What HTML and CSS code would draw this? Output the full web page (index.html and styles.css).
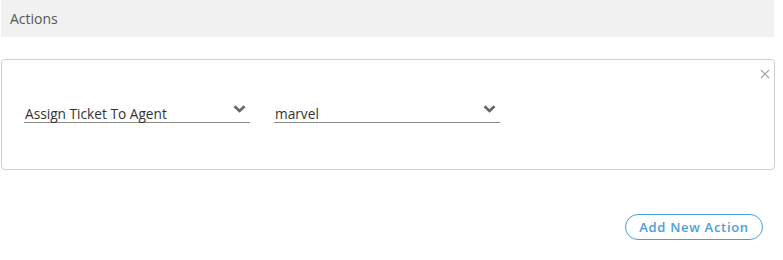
FILE: index.html
```html
<!DOCTYPE html>
<html>
<head>
<meta charset="utf-8">
<link rel="stylesheet" href="styles.css">
</head>
<body>
<div class="page">
  <div class="section-header">Actions</div>
  <div class="action-card">
    <button class="close-btn" aria-label="Remove">
      <svg width="10" height="10" viewBox="0 0 10 10"><path d="M1 1L9 9M9 1L1 9" stroke="#9aa3ab" stroke-width="1.2" fill="none"/></svg>
    </button>
    <div class="action-row">
      <div class="select">
        <span class="select-value">Assign Ticket To Agent</span>
        <svg class="chevron" width="13" height="8" viewBox="0 0 13 8"><path d="M1.5 1.2L6.5 6L11.5 1.2" stroke="#666" stroke-width="2.6" fill="none"/></svg>
      </div>
      <div class="select">
        <span class="select-value">marvel</span>
        <svg class="chevron" width="13" height="8" viewBox="0 0 13 8"><path d="M1.5 1.2L6.5 6L11.5 1.2" stroke="#666" stroke-width="2.6" fill="none"/></svg>
      </div>
    </div>
  </div>
  <div class="footer">
    <button class="add-btn">Add New Action</button>
  </div>
</div>
</body>
</html>
```
FILE: styles.css
```css
* { box-sizing: border-box; }
body {
  margin: 0;
  font-family: "Open Sans", "Liberation Sans", sans-serif;
  background: #fff;
  color: #333;
}
.page {
  width: 775px;
  padding-left: 1px;
}
.section-header {
  height: 37px;
  width: 773px;
  background: #f1f1f1;
  font-size: 14px;
  color: #555;
  padding: 9px 0 0 9px;
  line-height: 19px;
}
.action-card {
  position: relative;
  margin-top: 22px;
  width: 774px;
  height: 111px;
  border: 1px solid #cfcfcf;
  border-radius: 4px;
  padding: 37px 0 0 22px;
}
.close-btn {
  position: absolute;
  top: 8px;
  right: 3px;
  border: 0;
  background: none;
  padding: 0;
  width: 12px;
  height: 12px;
  display: flex;
  align-items: center;
  justify-content: center;
}
.action-row {
  display: flex;
  gap: 24px;
}
.select {
  width: 226px;
  height: 26px;
  border-bottom: 1px solid #8a8a8a;
  display: flex;
  align-items: flex-end;
  justify-content: space-between;
  position: relative;
}
.select-value {
  font-size: 13.7px;
  line-height: 16px;
  color: #333;
  padding-left: 1px;
  padding-bottom: 0;
}
.chevron {
  position: absolute;
  right: 4px;
  top: 8px;
}
.footer {
  display: flex;
  justify-content: flex-end;
  padding-top: 44px;
  padding-right: 12px;
}
.add-btn {
  font-family: "Open Sans", "Liberation Sans", sans-serif;
  font-size: 13px;
  font-weight: 600;
  letter-spacing: 0.7px;
  color: #4a9fdb;
  background: #fff;
  border: 1px solid #4a9fdb;
  border-radius: 13px;
  height: 26px;
  width: 138px;
  padding: 0;
  line-height: 24px;
}
```
